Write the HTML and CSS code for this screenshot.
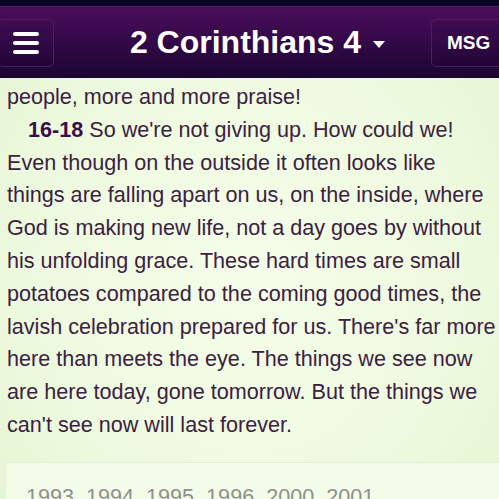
FILE: index.html
```html
<!DOCTYPE html>
<html lang="en">
<head>
    <meta charset="UTF-8">
    <title>2 Corinthians 4 - MSG</title>
    <link rel="stylesheet" href="styles.css">
</head>
<body>
    <div class="status"></div>
    <header class="topbar">
        <button class="btn btn-menu" aria-label="Menu">
            <span></span><span></span><span></span>
        </button>
        <div class="chapter">2 Corinthians 4 <span class="caret"></span></div>
        <button class="btn btn-version">MSG</button>
    </header>
    <main class="reader">
        <p class="verse-text">people, more and more praise!</p>
        <p class="verse-text indent"><b class="num">16-18</b> So we're not giving up. How could we!<br>
        Even though on the outside it often looks like<br>
        things are falling apart on us, on the inside, where<br>
        God is making new life, not a day goes by without<br>
        his unfolding grace. These hard times are small<br>
        potatoes compared to the coming good times, the<br>
        lavish celebration prepared for us. There's far more<br>
        here than meets the eye. The things we see now<br>
        are here today, gone tomorrow. But the things we<br>
        can't see now will last forever.</p>
    </main>
    <div class="copyright">
        1993, 1994, 1995, 1996, 2000, 2001
    </div>
</body>
</html>
```

FILE: styles.css
```css
body {
    margin: 0;
    padding: 0;
    height: 499px;
    overflow: hidden;
    font-family: "Liberation Sans", Arial, sans-serif;
    background: radial-gradient(ellipse at 50% 55%, #f4fde9 0%, #eefadf 60%, #e4f4d2 100%);
    color: #3c2141;
}
.status {
    height: 6px;
    background: #0c0626;
}
.topbar {
    height: 72px;
    box-sizing: border-box;
    border-top: 1px solid #5c1a6c;
    background: linear-gradient(to bottom, #4a0e5b, #2d0843 60%, #1b0532);
    display: flex;
    align-items: center;
    justify-content: space-between;
}
.btn {
    height: 48px;
    background: linear-gradient(to bottom, #3f0c50, #22063a);
    border: 1px solid #521a63;
    border-radius: 5px;
    color: #fff;
    font-family: inherit;
    padding: 0;
}
.btn-menu {
    width: 56px;
    margin-left: -2px;
    display: flex;
    flex-direction: column;
    align-items: flex-start;
    justify-content: center;
    gap: 5px;
    padding-left: 14px;
    box-sizing: border-box;
}
.btn-menu span {
    display: block;
    width: 26px;
    height: 4px;
    border-radius: 2px;
    background: #fff;
}
.chapter {
    color: #fff;
    font-weight: bold;
    font-size: 32px;
    margin-left: 30px;
    display: flex;
    align-items: center;
}
.caret {
    display: inline-block;
    margin-left: 12px;
    margin-top: 4px;
    border-left: 6px solid transparent;
    border-right: 6px solid transparent;
    border-top: 7px solid #fff;
}
.btn-version {
    width: 72px;
    margin-right: -4px;
    font-size: 19px;
    font-weight: bold;
    text-align: left;
    padding-left: 15px;
}
.reader {
    padding: 3px 0 0 7px;
}
.verse-text {
    margin: 0;
    font-size: 21.6px;
    line-height: 32.8px;
    white-space: nowrap;
}
.indent {
    text-indent: 21px;
}
.num {
    color: #3a0d4a;
}
.copyright {
    margin: 20px 0 0 5px;
    padding: 21px 0 0 20px;
    height: 40px;
    background: #f3fbe9;
    border-top: 1px solid #e2eed6;
    border-left: 1px solid #e2eed6;
    color: #8d918a;
    font-size: 21.6px;
}
```
